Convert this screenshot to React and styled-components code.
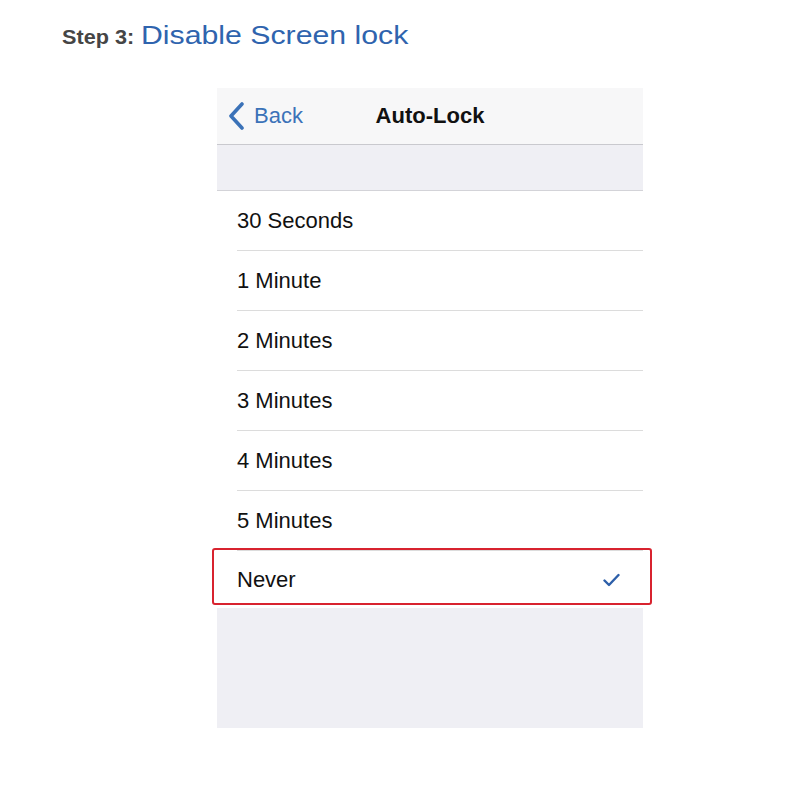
import styled, { createGlobalStyle } from "styled-components";

const GlobalStyle = createGlobalStyle`
    html, body {
        margin: 0;
        padding: 0;
        background: #ffffff;
    }
    body {
        font-family: "Liberation Sans", Arial, sans-serif;
    }
`;

const Page = styled.div`
    width: 800px;
    height: 800px;
    background: #ffffff;
    overflow: hidden;
`;

const Heading = styled.h1`
    margin: 0;
    padding: 20px 0 0 62px;
    height: 31px;
    font-size: 25px;
    line-height: 31px;
    font-weight: normal;
    display: flex;
    align-items: baseline;
`;

const StepLabel = styled.span`
    display: inline-block;
    font-size: 21px;
    font-weight: bold;
    color: #454545;
    transform: scaleX(1.03);
    transform-origin: left center;
    margin-right: 9px;
`;

const StepTitle = styled.span`
    display: inline-block;
    font-size: 25px;
    color: #2f64ae;
    transform: scaleX(1.21);
    transform-origin: left center;
`;

const Phone = styled.div`
    width: 426px;
    margin: 37px 0 0 217px;
    background: #efeff4;
    display: flex;
    flex-direction: column;
    height: 640px;
`;

const NavBar = styled.div`
    height: 56px;
    border-bottom: 1px solid #c9c9ce;
    background: #f7f7f8;
    display: grid;
    grid-template-columns: 1fr auto 1fr;
    align-items: center;
`;

const BackButton = styled.div`
    display: flex;
    align-items: center;
    gap: 8px;
    padding-left: 10px;
    color: #3b72b8;
    font-size: 22px;
`;

const NavTitle = styled.div`
    font-size: 22px;
    font-weight: bold;
    color: #111111;
`;

const Band = styled.div`
    height: 45px;
    border-bottom: 1px solid #d3d3d8;
`;

const List = styled.div`
    background: #ffffff;
    display: flex;
    flex-direction: column;
`;

const Row = styled.div`
    position: relative;
    padding-left: 20px;

    ${(p) =>
        p.$highlight &&
        `
        &::after {
            content: "";
            position: absolute;
            left: -5px;
            right: -9px;
            top: -3px;
            bottom: 3px;
            border: 2px solid #d8232f;
            border-radius: 3px;
        }
    `}
`;

const RowInner = styled.div`
    height: ${(p) => (p.$last ? "57px" : "59px")};
    display: flex;
    align-items: center;
    justify-content: space-between;
    padding-right: 23px;
    border-bottom: ${(p) => (p.$last ? "none" : "1px solid #dcdcdc")};
    font-size: 22px;
    color: #111111;
`;

function Chevron() {
    return (
        <svg width="19" height="28" viewBox="0 0 19 28">
            <path d="M15 2 L4 14 L15 26" fill="none" stroke="#3b72b8" strokeWidth="3.6" strokeLinecap="round" strokeLinejoin="round" />
        </svg>
    );
}

function Check() {
    return (
        <svg width="17" height="14" viewBox="0 0 17 14">
            <path d="M1.5 7.5 L6 12 L15.5 2" fill="none" stroke="#2d5fa9" strokeWidth="2.4" strokeLinecap="round" strokeLinejoin="round" />
        </svg>
    );
}

const options = ["30 Seconds", "1 Minute", "2 Minutes", "3 Minutes", "4 Minutes", "5 Minutes", "Never"];

export default function App() {
    return (
        <Page>
            <GlobalStyle />
            <Heading>
                <StepLabel>Step 3:</StepLabel>
                <StepTitle>Disable Screen lock</StepTitle>
            </Heading>
            <Phone>
                <NavBar>
                    <BackButton>
                        <Chevron />
                        <span>Back</span>
                    </BackButton>
                    <NavTitle>Auto-Lock</NavTitle>
                    <div />
                </NavBar>
                <Band />
                <List>
                    {options.map((opt, i) => {
                        const last = i === options.length - 1;
                        return (
                            <Row key={opt} $highlight={last}>
                                <RowInner $last={last}>
                                    <span>{opt}</span>
                                    {last && <Check />}
                                </RowInner>
                            </Row>
                        );
                    })}
                </List>
            </Phone>
        </Page>
    );
}
